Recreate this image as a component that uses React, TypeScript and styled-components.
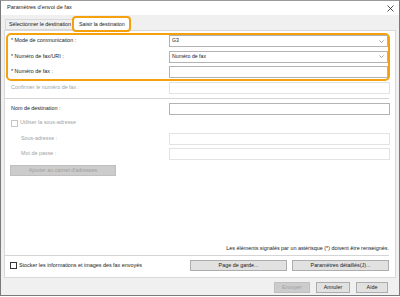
import React from 'react';
import styled, { createGlobalStyle } from 'styled-components';

const GlobalStyle = createGlobalStyle`
  html, body {
    margin: 0;
    padding: 0;
    background: #ffffff;
  }
  body {
    font-family: "Liberation Sans", Arial, sans-serif;
  }
`;

const orange = '#f5a00f';

const Window = styled.div`
  width: 400px;
  height: 296px;
  box-sizing: border-box;
  border: 1px solid #7a7a7a;
  border-top-color: #9a9a9a;
  background: #f0f0f0;
  display: flex;
  flex-direction: column;
  font-size: 5.4px;
  line-height: 1;
  color: #1b1b1b;
`;

const TitleBar = styled.div`
  height: 14px;
  background: #ffffff;
  display: flex;
  align-items: center;
  justify-content: space-between;
  padding: 0 5px 0 6px;
  font-size: 5.6px;
`;

const CloseButton = styled.span`
  display: flex;
  align-items: center;
`;

const Body = styled.div`
  flex: 1;
  display: flex;
  flex-direction: column;
  padding: 0 3px;
`;

const TabRow = styled.div`
  display: flex;
  align-items: flex-end;
  height: 15px;
  padding-left: 1px;
  position: relative;
  z-index: 1;
`;

const Tab = styled.div<{ $active?: boolean }>`
  position: relative;
  box-sizing: border-box;
  height: ${({ $active }) => ($active ? '14px' : '11px')};
  width: ${({ $active }) => ($active ? '57px' : '68px')};
  margin-bottom: ${({ $active }) => ($active ? '-1px' : '0')};
  padding-left: ${({ $active }) => ($active ? '5px' : '3px')};
  display: flex;
  align-items: center;
  background: ${({ $active }) => ($active ? '#ffffff' : '#f0f0f0')};
  border: 1px solid #d9d9d9;
  border-bottom: ${({ $active }) => ($active ? 'none' : '1px solid #d9d9d9')};
  white-space: nowrap;
  letter-spacing: -0.05px;

  ${({ $active }) =>
    $active &&
    `
    &::after {
      content: '';
      position: absolute;
      left: -2px;
      right: -2px;
      top: -2px;
      bottom: -1px;
      border: 2px solid ${orange};
      border-radius: 4px;
    }
  `}
`;

const Panel = styled.div`
  height: 248px;
  box-sizing: border-box;
  background: #ffffff;
  border: 1px solid #d9d9d9;
  display: flex;
  flex-direction: column;
  padding: 2px 5px 0 1px;
`;

const Highlight = styled.div`
  border: 2px solid ${orange};
  border-radius: 5px;
  padding: 0 0 1px 3px;
  display: flex;
  flex-direction: column;
  gap: 3.5px;
`;

const Section = styled.div<{ $indent?: number; $top?: number; $gap?: number }>`
  padding-left: ${({ $indent }) => $indent ?? 5}px;
  margin-top: ${({ $top }) => $top ?? 0}px;
  gap: ${({ $gap }) => $gap ?? 0}px;
  display: flex;
  flex-direction: column;
`;

const Row = styled.div`
  display: grid;
  grid-template-columns: 158px 1fr;
  align-items: center;
`;

const Label = styled.span<{ $disabled?: boolean; $indent?: number }>`
  color: ${({ $disabled }) => ($disabled ? '#a3a3a3' : '#1b1b1b')};
  padding-left: ${({ $indent }) => $indent ?? 0}px;
  white-space: nowrap;
`;

const Field = styled.div<{ $disabled?: boolean }>`
  box-sizing: border-box;
  height: 12px;
  border: 1px solid ${({ $disabled }) => ($disabled ? '#e3e3e3' : '#b3b3b3')};
  background: #ffffff;
  display: flex;
  align-items: center;
  justify-content: space-between;
  padding: 0 3px 0 2px;
  font-size: 5.2px;
`;

const Separator = styled.div<{ $top?: number }>`
  height: 1px;
  background: #d5d5d5;
  margin: ${({ $top }) => $top ?? 4}px 1px 0 -2px;
`;

const CheckRow = styled.label<{ $disabled?: boolean }>`
  display: flex;
  align-items: center;
  gap: 2px;
  color: ${({ $disabled }) => ($disabled ? '#a3a3a3' : '#1b1b1b')};
  white-space: nowrap;
`;

const Box = styled.span<{ $disabled?: boolean }>`
  box-sizing: border-box;
  width: 7px;
  height: 7px;
  border: 1px solid ${({ $disabled }) => ($disabled ? '#c6c6c6' : '#333333')};
  background: #ffffff;
`;

const Button = styled.div<{ $disabled?: boolean; $width: number }>`
  box-sizing: border-box;
  width: ${({ $width }) => $width}px;
  height: 11px;
  border: 1px solid ${({ $disabled }) => ($disabled ? '#bfbfbf' : '#adadad')};
  background: ${({ $disabled }) => ($disabled ? '#cccccc' : '#e1e1e1')};
  color: ${({ $disabled }) => ($disabled ? '#a0a0a0' : '#1b1b1b')};
  display: flex;
  align-items: center;
  justify-content: center;
  white-space: nowrap;
`;

const Spacer = styled.div`
  flex: 1;
`;

const Note = styled.div`
  text-align: right;
  padding-right: 1px;
`;

const PanelFooter = styled.div`
  display: flex;
  align-items: center;
  gap: 5px;
  padding: 4px 1px 6px 4px;
`;

const DialogFooter = styled.div`
  display: flex;
  justify-content: flex-end;
  gap: 6px;
  padding: 4px 8px 0 0;
`;

const Chevron = () => (
  <svg width="5" height="3" viewBox="0 0 5 3">
    <polyline points="0.5,0.5 2.5,2.5 4.5,0.5" fill="none" stroke="#777" strokeWidth="0.7" />
  </svg>
);

const CloseIcon = () => (
  <svg width="7" height="7" viewBox="0 0 7 7">
    <path d="M0.5 0.5 L6.5 6.5 M6.5 0.5 L0.5 6.5" stroke="#222" strokeWidth="0.8" />
  </svg>
);

const App: React.FC = () => {
  return (
    <>
      <GlobalStyle />
      <Window>
        <TitleBar>
          <span>Paramètres d'envoi de fax</span>
          <CloseButton>
            <CloseIcon />
          </CloseButton>
        </TitleBar>
        <Body>
          <TabRow>
            <Tab>Sélectionner le destination</Tab>
            <Tab $active>Saisir la destination</Tab>
          </TabRow>
          <Panel>
            <Highlight>
              <Row>
                <Label>* Mode de communication :</Label>
                <Field>
                  G3
                  <Chevron />
                </Field>
              </Row>
              <Row>
                <Label>* Numéro de fax/URI :</Label>
                <Field>
                  Numéro de fax
                  <Chevron />
                </Field>
              </Row>
              <Row>
                <Label>* Numéro de fax :</Label>
                <Field />
              </Row>
            </Highlight>
            <Section $top={1}>
              <Row>
                <Label $disabled>Confirmer le numéro de fax :</Label>
                <Field $disabled />
              </Row>
            </Section>
            <Separator $top={3.5} />
            <Section $top={4} $gap={5}>
              <Row>
                <Label>Nom de destination :</Label>
                <Field />
              </Row>
              <CheckRow $disabled>
                <Box $disabled />
                Utiliser la sous-adresse
              </CheckRow>
            </Section>
            <Section $top={6} $gap={3.5}>
              <Row>
                <Label $disabled $indent={10}>Sous-adresse :</Label>
                <Field $disabled />
              </Row>
              <Row>
                <Label $disabled $indent={10}>Mot de passe :</Label>
                <Field $disabled />
              </Row>
            </Section>
            <Section $top={5} $indent={4}>
              <Button $disabled $width={106}>
                Ajouter au carnet d'adresses
              </Button>
            </Section>
            <Spacer />
            <Note>Les éléments signalés par un astérisque (*) doivent être renseignés.</Note>
            <Separator />
            <PanelFooter>
              <CheckRow>
                <Box />
                Stocker les informations et images des fax envoyés
              </CheckRow>
              <Spacer />
              <Button $width={97}>Page de garde...</Button>
              <Button $width={97}>Paramètres détaillés(J)...</Button>
            </PanelFooter>
          </Panel>
          <DialogFooter>
            <Button $disabled $width={36}>Envoyer</Button>
            <Button $width={34}>Annuler</Button>
            <Button $width={32}>Aide</Button>
          </DialogFooter>
        </Body>
      </Window>
    </>
  );
};

export default App;
